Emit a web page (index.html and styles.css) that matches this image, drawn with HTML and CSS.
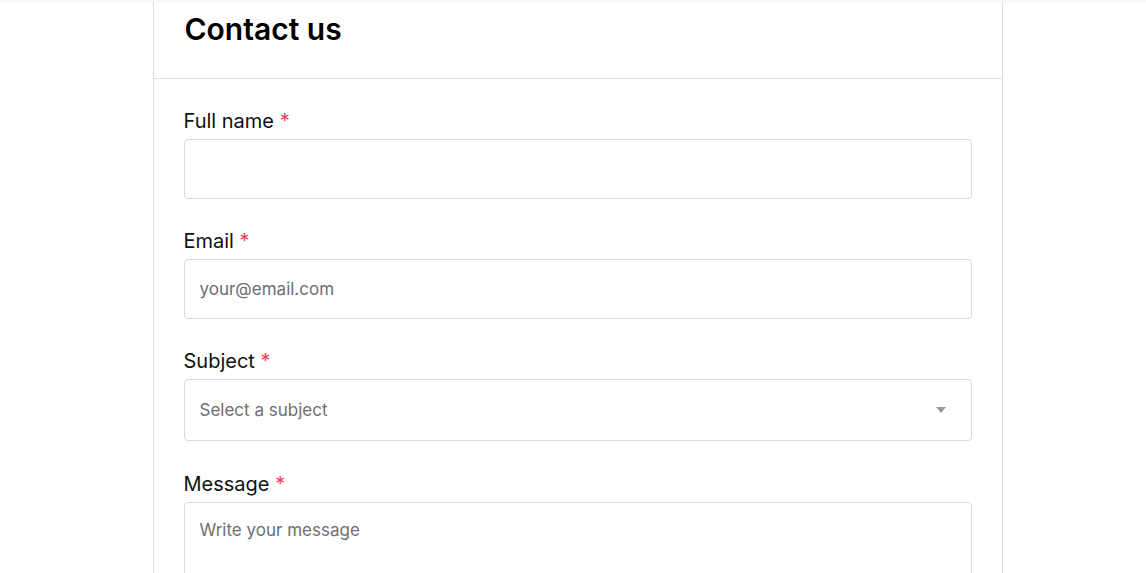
FILE: index.html
```html
<!DOCTYPE html>
<html lang="en">

<head>
    <meta charset="UTF-8">
    <meta name="viewport" content="width=device-width, initial-scale=1.0">
    <title>Contact us</title>
    <link rel="stylesheet" href="styles.css">
</head>

<body>
    <div class="page">
        <div class="card">
            <div class="card-header">
                <h1>Contact us</h1>
            </div>

            <form class="contact-form">
                <div class="field">
                    <label for="name">Full name <span class="req">*</span></label>
                    <input type="text" id="name">
                </div>

                <div class="field">
                    <label for="email">Email <span class="req">*</span></label>
                    <input type="email" id="email" placeholder="your@email.com">
                </div>

                <div class="field">
                    <label for="subject">Subject <span class="req">*</span></label>
                    <div class="select-wrap">
                        <select id="subject">
                            <option value="">Select a subject</option>
                            <option>General question</option>
                            <option>Support</option>
                            <option>Feedback</option>
                        </select>
                    </div>
                </div>

                <div class="field field-message">
                    <label for="message">Message <span class="req">*</span></label>
                    <textarea id="message" placeholder="Write your message"></textarea>
                </div>
            </form>
        </div>
    </div>
</body>

</html>
```

FILE: styles.css
```css
html, body {
    margin: 0;
    overflow: hidden;
}

body {
    font-family: Inter, "Noto Sans", Arial, sans-serif;
    color: #111;
    background: #fff;
    border-top: 2px solid #f7f7f7;
}

.page {
    padding-left: 9px;
}

.card {
    width: 850px;
    margin: 0 auto;
    box-sizing: border-box;
    border-left: 1px solid #dcdcdc;
    border-right: 1px solid #dcdcdc;
}

.card-header {
    padding: 9px 30px 31px;
    border-bottom: 1px solid #dcdcdc;
}

.card-header h1 {
    margin: 0;
    font-size: 30px;
    font-weight: 600;
    color: #000;
    padding-left: 1px;
}

.contact-form {
    padding: 30px 30px 0;
}

.field {
    margin-bottom: 30px;
}

.field label {
    display: block;
    font-size: 20px;
    font-weight: 400;
    margin-bottom: 6px;
    color: #111;
}

.req {
    color: #ef4360;
}

input,
select,
textarea {
    display: block;
    width: 100%;
    box-sizing: border-box;
    font-family: inherit;
    font-size: 17px;
    color: #111;
    border: 1px solid #d9d9d9;
    border-radius: 4px;
    background: #fff;
    padding: 0 15px;
    outline: none;
}

input {
    height: 60px;
}

input::placeholder,
textarea::placeholder {
    color: #6e6e72;
}

.select-wrap {
    position: relative;
}

select {
    height: 62px;
    appearance: none;
    color: #6e6e72;
}

.select-wrap::after {
    content: "";
    position: absolute;
    right: 26px;
    top: 28px;
    border-left: 5px solid transparent;
    border-right: 5px solid transparent;
    border-top: 6px solid #9a9a9a;
    pointer-events: none;
}

.field-message {
    margin-top: 31px;
}

textarea {
    height: 160px;
    padding: 17px 15px;
    resize: vertical;
}
```
